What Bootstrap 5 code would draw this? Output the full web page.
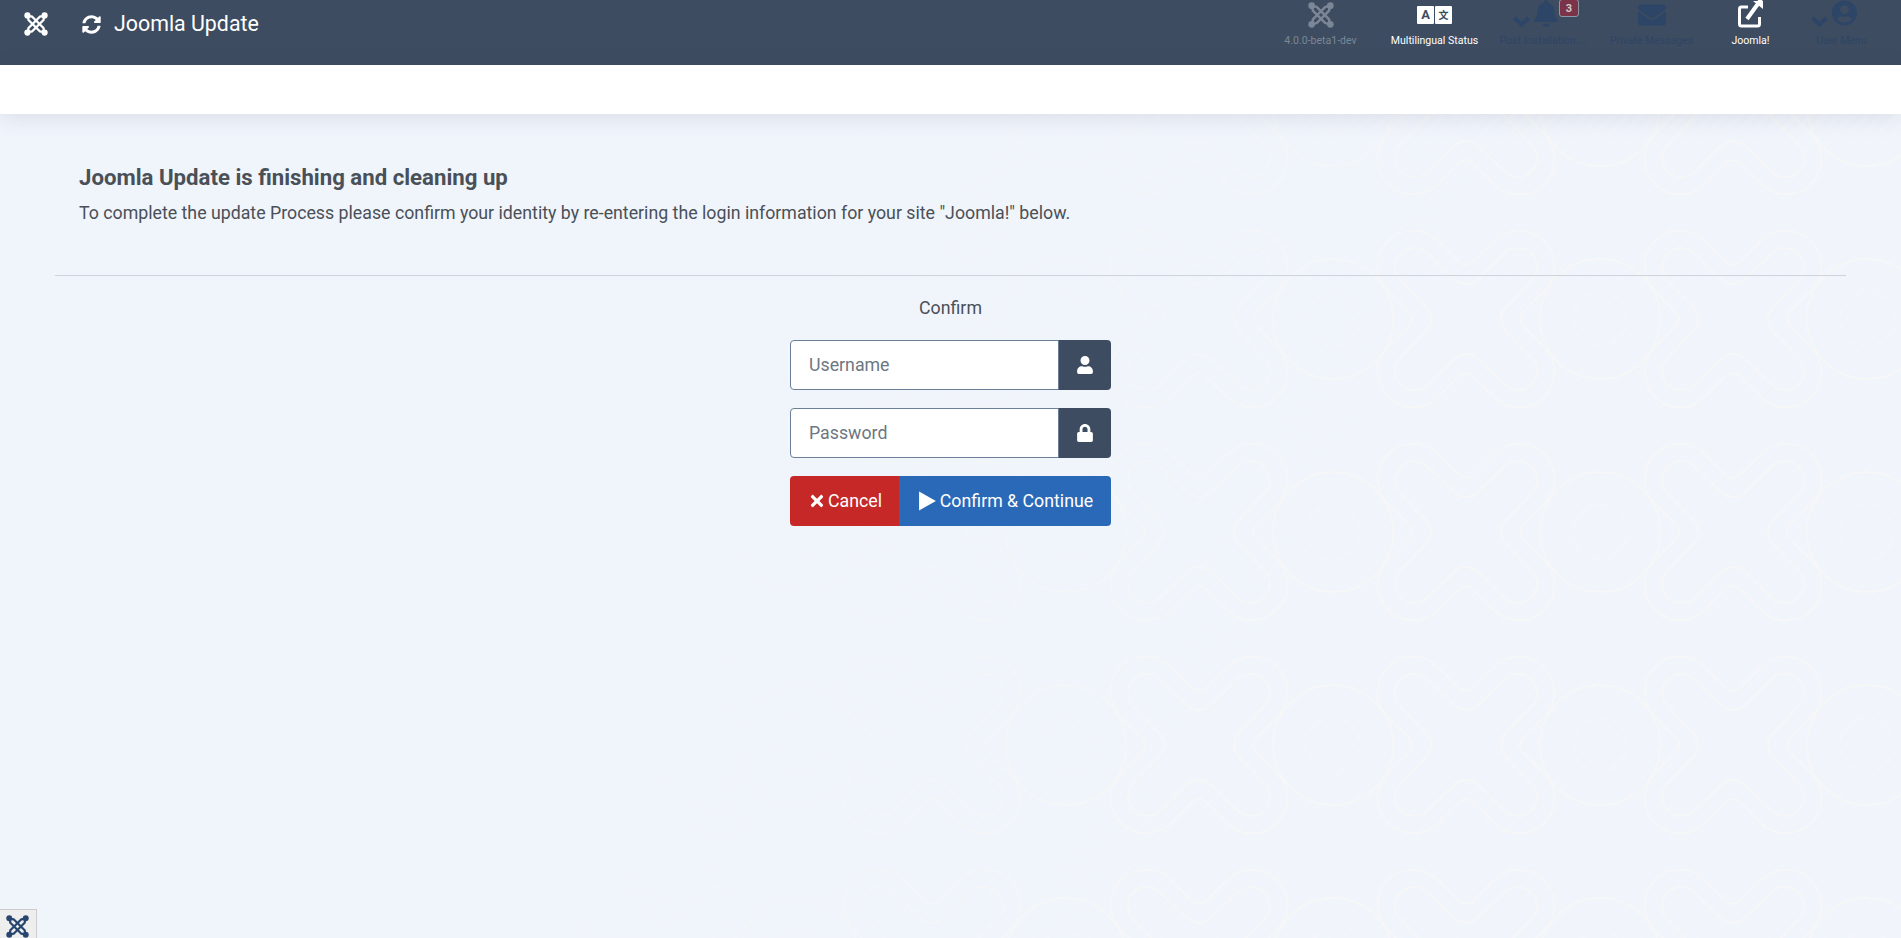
<!DOCTYPE html>

<html>

<head>
    <title>Joomla Update</title>
    <link rel="stylesheet" href="https://cdn.jsdelivr.net/npm/bootstrap@5.3.2/dist/css/bootstrap.min.css">
    <style>
        body {
            font-family: Roboto, "Liberation Sans", sans-serif;
            font-size: 17.76px;
            color: #495057;
            min-height: 100vh;
            background-color: #f0f4fb;
            background-image:
                linear-gradient(116.6deg, #f0f4fb 38%, rgba(240, 244, 251, 0) 68%),
                url("data:image/svg+xml,%3Csvg xmlns='http://www.w3.org/2000/svg' width='267' height='213'%3E%3Cg fill='none' stroke='%23f7f8f5' stroke-width='1.3'%3E%3Cg transform='translate(131 106)'%3E%3Cpath d='M8-58Q0-50-8-58L-28-78A35 35 0 0 0-78-28L-58-8Q-50 0-58 8L-78 28A35 35 0 0 0-28 78L-8 58Q0 50 8 58L28 78A35 35 0 0 0 78 28L58 8Q50 0 58-8L78-28A35 35 0 0 0 28-78Z'/%3E%3Cpath d='M12-40Q0-30-12-40L-39.6-66.4A19 19 0 0 0-66.4-39.6L-40-12Q-30 0-40 12L-66.4 39.6A19 19 0 0 0-39.6 66.4L-12 40Q0 30 12 40L39.6 66.4A19 19 0 0 0 66.4 39.6L40 12Q30 0 40-12L66.4-39.6A19 19 0 0 0 39.6-66.4Z'/%3E%3C/g%3E%3Ccircle cx='265' cy='106' r='60'/%3E%3Ccircle cx='-2' cy='106' r='60'/%3E%3Cg stroke-width='.8' opacity='.6'%3E%3Ccircle cx='265' cy='106' r='27'/%3E%3Ccircle cx='-2' cy='106' r='27'/%3E%3C/g%3E%3C/g%3E%3C/svg%3E"),
                repeating-linear-gradient(135deg, rgba(255, 255, 255, .1) 0 5px, rgba(255, 255, 255, 0) 5px 10px);
        }

        .top-head {
            height: 65px;
            background: #3d4c60;
            color: #fff;
            overflow: hidden;
        }

        .head-logo {
            width: 24px;
            height: 24px;
            margin: 12px 0 0 24px;
        }

        .head-sync {
            width: 19px;
            height: 19px;
            margin: 15px 0 0 34px;
        }

        .head-title {
            font-size: 21.36px;
            line-height: 24px;
            margin: 12px 0 0 13px;
        }

        .head-item {
            width: 109px;
            font-size: 10.56px;
            color: #2d4566;
        }

        .head-item:nth-of-type(1) {
            width: 119px;
            color: #7b8796;
        }

        .head-item:nth-of-type(2),
        .head-item:nth-of-type(5) {
            color: #fff;
        }

        .head-item:nth-of-type(3) {
            width: 108px;
        }

        .head-item:nth-of-type(5) {
            width: 89px;
        }

        .head-item:nth-of-type(6) {
            width: 93px;
        }

        .head-icons {
            height: 29px;
            gap: 4px;
        }

        .head-shift {
            margin-right: 16px;
        }

        .head-label {
            line-height: 14px;
            margin-top: 5px;
            white-space: nowrap;
        }

        .head-end {
            padding-right: 13px;
        }

        .head-badge {
            position: absolute;
            top: -1px;
            left: 70px;
            width: 20px;
            height: 18px;
            font-size: 11px;
            line-height: 18px;
            border: 1px solid #8c98a6;
            border-radius: 3px;
            background: #7c3347;
            color: #c9ccd2;
            font-weight: 700;
            text-align: center;
        }

        .lang-box {
            gap: 1px;
        }

        .lang-box span {
            width: 17px;
            height: 18px;
            background: #fff;
            color: #3d4c60;
            font-size: 13px;
            line-height: 18px;
            font-weight: 700;
            text-align: center;
            border-radius: 1px;
        }

        .lang-box span + span {
            font-family: "Noto Sans CJK SC", sans-serif;
            font-size: 10px;
        }

        .sub-head {
            height: 49px;
            background: #fff;
            box-shadow: 0 3px 22px rgba(60, 70, 90, .13);
        }

        .intro-box {
            padding: 50px 0 0 79px;
        }

        .intro-title {
            font-size: 22.2px;
            font-weight: 700;
            line-height: 26px;
            margin: 0 0 10px;
        }

        .intro-text {
            line-height: 27px;
            margin: 0;
        }

        .rule-line {
            margin: 48px 55px 0 55px;
            border: 0;
            border-top: 1px solid #cfd3dc;
            opacity: 1;
        }

        .confirm-form {
            width: 321px;
            margin: 0 auto;
        }

        .confirm-title {
            line-height: 27px;
            margin: 19px 0 18px;
            text-align: center;
            color: #495057;
        }

        .confirm-form .form-control {
            height: 50px;
            font-size: 17.76px;
            padding: 0 18px;
            color: #495057;
            border: 1px solid #6c7f98;
            border-radius: 4px;
        }

        .confirm-form .form-control::placeholder {
            color: #6d7781;
        }

        .confirm-form .input-group-text {
            width: 53px;
            justify-content: center;
            background: #3d4c60;
            border: 0;
            border-radius: 0 4px 4px 0;
        }

        .input-gap {
            margin-bottom: 18px;
        }

        .confirm-btns .btn {
            height: 50px;
            font-size: 17.76px;
            color: #fff;
            border: 0;
            border-radius: 4px;
            padding: 0 0 0 2px;
        }

        .confirm-btns .btn-cancel {
            flex: 0 0 110px;
            background: #c52827;
        }

        .confirm-btns .btn-go {
            flex: 1 1 auto;
            background: #2a69b8;
        }

        .debug-tab {
            position: fixed;
            left: 0;
            bottom: 0;
            width: 37px;
            height: 29px;
            color: #27466f;
            background: #eee;
            border-top: 1px solid #ccc;
            border-right: 1px solid #ccc;
            padding: 5px 0 0 6px;
            overflow: hidden;
        }

        .debug-tab svg {
            width: 23px;
            height: 23px;
            display: block;
        }
    </style>
</head>

<body>
    <svg width="0" height="0" class="d-block position-absolute">
        <symbol id="joomla-mark" viewBox="0 0 24 24">
            <g fill="none" stroke="currentColor" stroke-width="2.300">
                <path d="M4 4l.5 4L16 19.500l4 .5" />
                <path d="M4 4l4 .5L19.500 16l.5 4" />
                <path d="M20 4l-.5 4L8 19.500 4 20" />
                <path d="M20 4l-4 .5L4.500 16 4 20" />
            </g>
            <g fill="currentColor">
                <circle cx="3.400" cy="3.400" r="3.100" />
                <circle cx="20.600" cy="3.400" r="3.100" />
                <circle cx="3.400" cy="20.600" r="3.100" />
                <circle cx="20.600" cy="20.600" r="3.100" />
            </g>
        </symbol>
    </svg>

    <header class="top-head d-flex align-items-start">
        <svg class="head-logo flex-shrink-0"><use href="#joomla-mark" /></svg>
        <svg class="head-sync flex-shrink-0" viewBox="0 0 512 512" fill="#fff"><path d="M370.72 133.28C339.458 104.008 298.888 87.962 255.848 88c-77.458.068-144.328 53.178-162.791 126.85-1.344 5.363-6.122 9.15-11.651 9.15H24.103c-7.498 0-13.194-6.807-11.807-14.176C33.933 94.924 134.813 8 256 8c66.448 0 126.791 26.136 171.315 68.685L463.03 40.97C478.149 25.851 504 36.559 504 57.941V192c0 13.255-10.745 24-24 24H345.941c-21.382 0-32.09-25.851-16.971-40.971l41.75-41.749zM32 296h134.059c21.382 0 32.09 25.851 16.971 40.971l-41.75 41.75c31.262 29.273 71.835 45.319 114.876 45.28 77.418-.07 144.315-53.144 162.787-126.849 1.344-5.363 6.122-9.15 11.651-9.15h57.304c7.498 0 13.195 6.807 11.807 14.176C478.067 417.076 377.187 504 256 504c-66.448 0-126.791-26.136-171.315-68.685L48.97 471.03C33.851 486.149 8 475.441 8 454.059V320c0-13.255 10.745-24 24-24z" /></svg>
        <div class="head-title">Joomla Update</div>

        <div class="d-flex ms-auto head-end">
            <div class="head-item position-relative d-flex flex-column align-items-center">
                <div class="head-icons d-flex justify-content-center align-items-center">
                    <svg width="26" height="26"><use href="#joomla-mark" /></svg>
                </div>
                <div class="head-label">4.0.0-beta1-dev</div>
            </div>
            <div class="head-item position-relative d-flex flex-column align-items-center">
                <div class="head-icons d-flex justify-content-center align-items-center">
                    <div class="lang-box d-flex"><span>A</span><span>文</span></div>
                </div>
                <div class="head-label">Multilingual Status</div>
            </div>
            <div class="head-item position-relative d-flex flex-column align-items-center">
                <div class="head-icons head-shift d-flex justify-content-center align-items-start">
                    <svg class="mt-3" width="17" height="11" viewBox="0 0 17 11" fill="none" stroke="currentColor" stroke-width="4"><path d="M1.500 2l7 6.500 7-6.500" /></svg>
                    <svg width="24" height="27" viewBox="0 0 448 512" fill="currentColor"><path d="M224 512c35.32 0 63.97-28.65 63.97-64H160.03c0 35.35 28.65 64 63.97 64zm215.39-149.71c-19.32-20.76-55.47-51.99-55.47-154.29 0-77.7-54.48-139.9-127.94-155.16V32c0-17.67-14.32-32-31.98-32s-31.98 14.33-31.98 32v20.84C118.56 68.1 64.08 130.3 64.08 208c0 102.3-36.15 133.53-55.47 154.29-6 6.45-8.66 14.16-8.61 21.71.11 16.4 12.98 32 32.1 32h383.8c19.12 0 32-15.6 32.1-32 .05-7.55-2.61-15.27-8.61-21.71z" /></svg>
                </div>
                <span class="head-badge">3</span>
                <div class="head-label">Post Installation ...</div>
            </div>
            <div class="head-item position-relative d-flex flex-column align-items-center">
                <div class="head-icons d-flex justify-content-center align-items-center">
                    <svg width="28" height="28" viewBox="0 0 512 512" fill="currentColor"><path d="M502.3 190.8c3.9-3.1 9.7-.2 9.7 4.7V400c0 26.5-21.5 48-48 48H48c-26.5 0-48-21.5-48-48V195.6c0-5 5.7-7.8 9.7-4.7 22.4 17.4 52.1 39.5 154.1 113.6 21.1 15.4 56.7 47.8 92.2 47.6 35.7.3 72-32.8 92.3-47.6 102-74.1 131.6-96.3 154-113.7zM256 320c23.2.4 56.6-29.2 73.4-41.4 132.7-96.3 142.8-104.7 173.4-128.7 5.8-4.5 9.2-11.5 9.2-18.9v-19c0-26.5-21.5-48-48-48H48C21.5 64 0 85.5 0 112v19c0 7.4 3.4 14.3 9.2 18.9 30.6 23.9 40.7 32.4 173.4 128.7 16.8 12.2 50.2 41.8 73.4 41.4z" /></svg>
                </div>
                <div class="head-label">Private Messages</div>
            </div>
            <div class="head-item position-relative d-flex flex-column align-items-center">
                <div class="head-icons d-flex justify-content-center align-items-start">
                    <svg width="26" height="29" viewBox="0 0 26 29" fill="none" stroke="#fff" stroke-width="3"><path d="M10 7H3.500a2 2 0 0 0-2 2v15a2 2 0 0 0 2 2h16a2 2 0 0 0 2-2v-7" /><path d="M9 19L23-.5" stroke-width="4" /><path d="M15 1h10v8" fill="#fff" stroke="none" /></svg>
                </div>
                <div class="head-label">Joomla!</div>
            </div>
            <div class="head-item position-relative d-flex flex-column align-items-center">
                <div class="head-icons head-shift d-flex justify-content-center align-items-start">
                    <svg class="mt-3" width="17" height="11" viewBox="0 0 17 11" fill="none" stroke="currentColor" stroke-width="4"><path d="M1.500 2l7 6.500 7-6.500" /></svg>
                    <svg width="25" height="26" viewBox="0 0 496 512" fill="currentColor"><path d="M248 8C111 8 0 119 0 256s111 248 248 248 248-111 248-248S385 8 248 8zm0 96c48.6 0 88 39.4 88 88s-39.4 88-88 88-88-39.4-88-88 39.4-88 88-88zm0 344c-58.7 0-111.3-26.6-146.5-68.2 18.8-35.4 55.6-59.8 98.5-59.8 2.4 0 4.8.4 7.1 1.1 13 4.2 26.6 6.9 40.9 6.9 14.3 0 28-2.7 40.9-6.9 2.3-.7 4.7-1.1 7.1-1.1 42.9 0 79.7 24.4 98.5 59.8C359.3 421.4 306.7 448 248 448z" /></svg>
                </div>
                <div class="head-label">User Menu</div>
            </div>
        </div>
    </header>

    <div class="sub-head"></div>

    <main>
        <div class="intro-box">
            <h4 class="intro-title">Joomla Update is finishing and cleaning up</h4>
            <p class="intro-text">To complete the update Process please confirm your identity by re-entering the login information for your site "Joomla!" below.</p>
        </div>
        <hr class="rule-line">

        <form class="confirm-form">
            <div class="confirm-title">Confirm</div>
            <div class="input-group input-gap">
                <input class="form-control" type="text" placeholder="Username">
                <span class="input-group-text">
                    <svg width="16" height="18" viewBox="0 0 448 512" fill="#fff"><path d="M224 256c70.7 0 128-57.3 128-128S294.7 0 224 0 96 57.3 96 128s57.3 128 128 128zm89.6 32h-16.7c-22.2 10.2-46.9 16-72.9 16s-50.6-5.8-72.9-16h-16.7C60.2 288 0 348.2 0 422.4V464c0 26.5 21.5 48 48 48h352c26.5 0 48-21.500 48-48v-41.6c0-74.2-60.2-134.4-134.4-134.4z" /></svg>
                </span>
            </div>
            <div class="input-group input-gap">
                <input class="form-control" type="password" placeholder="Password">
                <span class="input-group-text">
                    <svg width="16" height="18" viewBox="0 0 448 512" fill="#fff"><path d="M400 224h-24v-72C376 68.2 307.8 0 224 0S72 68.2 72 152v72H48c-26.5 0-48 21.5-48 48v192c0 26.5 21.5 48 48 48h352c26.5 0 48-21.5 48-48V272c0-26.5-21.5-48-48-48zm-104 0H152v-72c0-39.7 32.3-72 72-72s72 32.3 72 72v72z" /></svg>
                </span>
            </div>
            <div class="btn-group d-flex confirm-btns">
                <button type="button" class="btn btn-cancel d-flex align-items-center justify-content-center gap-1">
                    <svg width="14" height="18" viewBox="0 0 352 512" fill="#fff"><path d="M242.72 256l100.07-100.07c12.28-12.28 12.28-32.19 0-44.48l-22.24-22.24c-12.28-12.28-32.19-12.28-44.48 0L176 189.28 75.93 89.21c-12.28-12.28-32.19-12.28-44.48 0L9.21 111.45c-12.28 12.28-12.28 32.19 0 44.48L109.28 256 9.21 356.07c-12.28 12.28-12.28 32.19 0 44.48l22.24 22.24c12.28 12.28 32.2 12.28 44.48 0L176 322.72l100.07 100.07c12.28 12.28 32.2 12.28 44.48 0l22.24-22.24c12.28-12.28 12.28-32.19 0-44.48L242.72 256z" /></svg>
                    Cancel
                </button>
                <button type="button" class="btn btn-go d-flex align-items-center justify-content-center gap-1">
                    <svg width="17" height="20" viewBox="0 0 16 19" fill="#fff"><path d="M0 .5L16 9.500 0 18.500z" /></svg>
                    Confirm &amp; Continue
                </button>
            </div>
        </form>
    </main>

    <div class="debug-tab"><svg><use href="#joomla-mark" /></svg></div>

    <script src="https://cdn.jsdelivr.net/npm/bootstrap@5.3.2/dist/js/bootstrap.bundle.min.js"></script>
</body>

</html>
